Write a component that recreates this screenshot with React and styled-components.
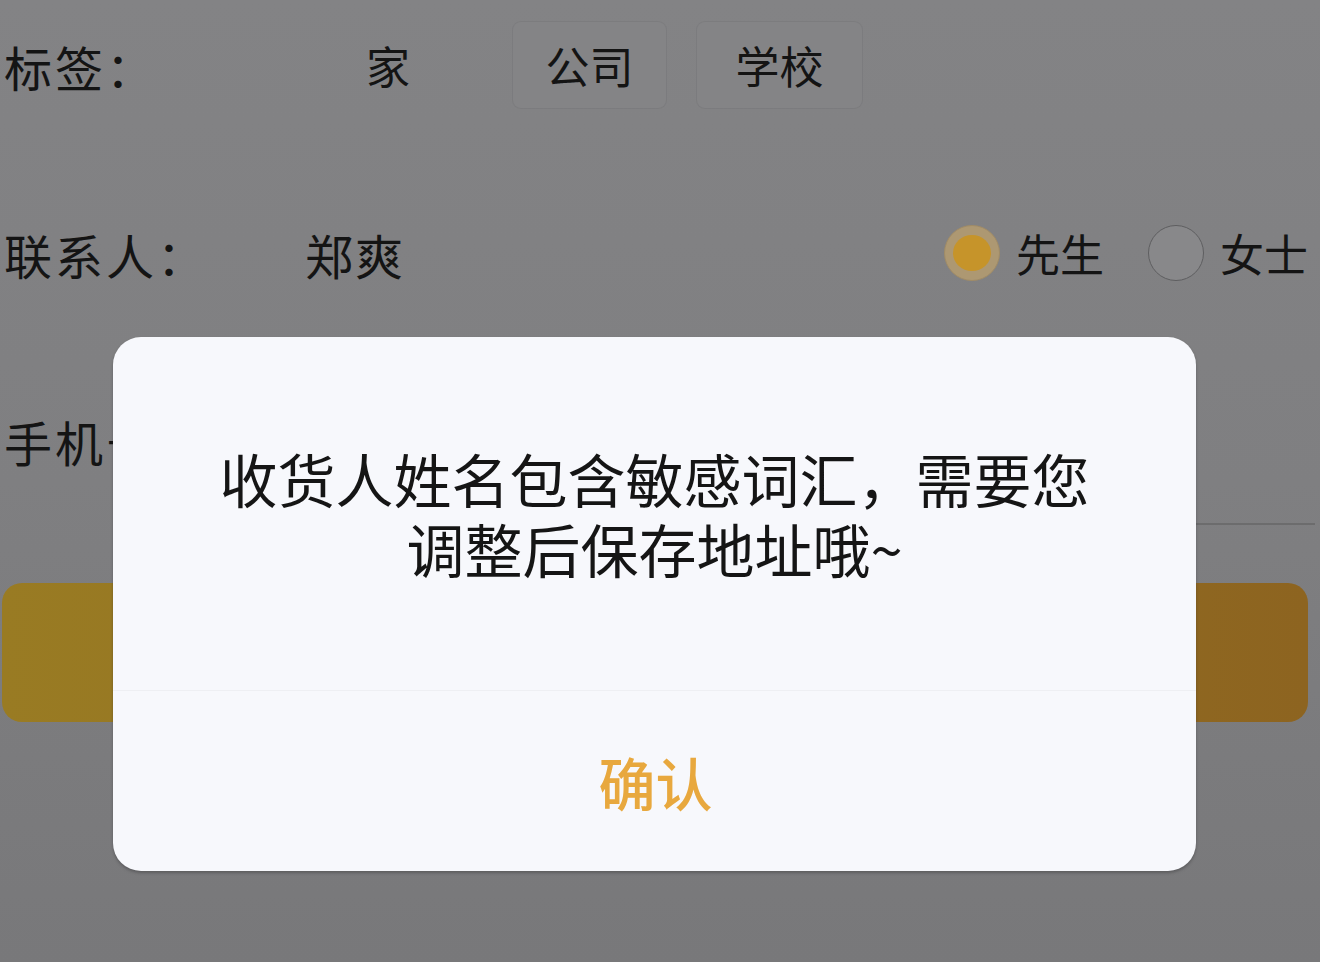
import React from 'react'
import styled, {createGlobalStyle} from 'styled-components'

const GlobalStyle = createGlobalStyle`
  html, body {
    margin: 0;
    padding: 0;
  }
  body {
    width: 1320px;
    height: 962px;
    overflow: hidden;
    font-family: "Noto Sans CJK SC", "Noto Sans", sans-serif;
    color: #141414;
  }
`

const Page = styled.div`
  position: relative;
  width: 1320px;
  height: 962px;
  background: linear-gradient(180deg, #838385 0%, #7f7f81 50%, #78787a 100%);
  display: flex;
  flex-direction: column;
`

const Row = styled.div`
  display: flex;
  align-items: center;
  height: 86px;
  margin-top: ${p => p.$top}px;
  padding: 0 12px 0 4px;
`

const Label = styled.div`
  width: 301px;
  flex-shrink: 0;
  font-size: 48px;
  letter-spacing: 3px;
  line-height: 1;
  margin-top: 1px;
`

const Tags = styled.div`
  display: flex;
  margin-left: 5px;
`

const Tag = styled.div`
  width: ${p => p.$w}px;
  height: 86px;
  margin-left: ${p => p.$gap || 0}px;
  display: flex;
  align-items: center;
  justify-content: center;
  font-size: 44px;
  border-radius: 8px;
  background: ${p => (p.$boxed ? '#848486' : 'transparent')};
  box-shadow: ${p => (p.$boxed ? '0 0 0 1px rgba(110, 110, 112, 0.3)' : 'none')};
`

const Name = styled.div`
  flex: 1;
  font-size: 48px;
  letter-spacing: 2px;
  line-height: 1;
  margin-top: 1px;
`

const Radios = styled.div`
  display: flex;
  align-items: center;
  gap: 44px;
`

const RadioItem = styled.div`
  display: flex;
  align-items: center;
  gap: 16px;
  font-size: 44px;
`

const RadioDot = styled.span`
  width: 56px;
  height: 56px;
  border-radius: 50%;
  box-sizing: border-box;
  display: flex;
  align-items: center;
  justify-content: center;
  border: 1.5px solid ${p => (p.$checked ? '#a08b66' : '#5e5e60')};
  background: ${p => (p.$checked ? '#ad9872' : '#88888a')};

  &::after {
    content: '';
    display: ${p => (p.$checked ? 'block' : 'none')};
    width: 38px;
    height: 36px;
    border-radius: 50%;
    background: #c6942a;
  }
`

const Underline = styled.div`
  height: 2px;
  margin: 40px 5px 0 305px;
  background: #6c6c6d;
`

const SaveButton = styled.div`
  height: 139px;
  margin: 58px 12px 0 2px;
  border-radius: 20px;
  background: linear-gradient(90deg, #997b23 0%, #937122 50%, #8d6420 100%);
`

const Overlay = styled.div`
  position: absolute;
  inset: 0;
  display: flex;
  align-items: flex-start;
  padding: 337px 0 0 113px;
`

const Dialog = styled.div`
  width: 1083px;
  height: 534px;
  border-radius: 28px;
  background: #f7f8fc;
  box-shadow: 0 2px 3px rgba(40, 40, 44, 0.35);
  display: flex;
  flex-direction: column;
  overflow: hidden;
`

const Message = styled.div`
  height: 353px;
  box-sizing: border-box;
  padding: 106px 40px 0;
  text-align: center;
  font-size: 58px;
  color: #151515;
`

const Line = styled.div`
  height: 70px;
  line-height: 70px;
`

const Footer = styled.div`
  flex: 1;
  display: flex;
  align-items: center;
  justify-content: center;
  border-top: 1px solid #eeeff3;
  font-size: 57px;
  font-weight: 500;
  color: #e8a83e;
  padding-left: 2px;
`

const App = () => (
  <>
    <GlobalStyle />
    <Page>
      <Row $top={22}>
        <Label>标签：</Label>
        <Tags>
          <Tag $w={156}>家</Tag>
          <Tag $w={153} $gap={47} $boxed>公司</Tag>
          <Tag $w={165} $gap={31} $boxed>学校</Tag>
        </Tags>
      </Row>
      <Row $top={102}>
        <Label>联系人：</Label>
        <Name>郑爽</Name>
        <Radios>
          <RadioItem>
            <RadioDot $checked />
            先生
          </RadioItem>
          <RadioItem>
            <RadioDot />
            女士
          </RadioItem>
        </Radios>
      </Row>
      <Row $top={101}>
        <Label>手机号：</Label>
      </Row>
      <Underline />
      <SaveButton />

      <Overlay>
        <Dialog>
          <Message>
            <Line>收货人姓名包含敏感词汇，需要您</Line>
            <Line>调整后保存地址哦~</Line>
          </Message>
          <Footer>确认</Footer>
        </Dialog>
      </Overlay>
    </Page>
  </>
)

export default App
